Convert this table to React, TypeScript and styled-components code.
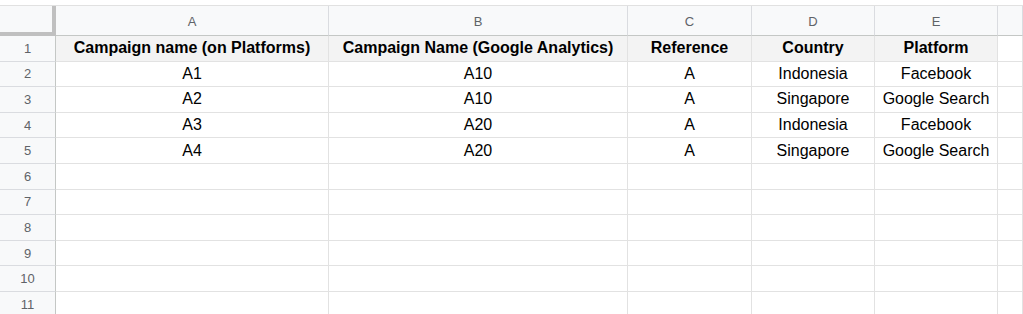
import React from 'react';
import styled, { createGlobalStyle } from 'styled-components';

const GlobalStyle = createGlobalStyle`
  html, body {
    margin: 0;
    padding: 0;
    background: #ffffff;
  }
  body {
    font-family: "Liberation Sans", Arial, sans-serif;
    overflow: hidden;
  }
`;

const Page = styled.div`
  padding-top: 5px;
  width: 1023px;
  height: 314px;
  box-sizing: border-box;
  overflow: hidden;
`;

const Grid = styled.div`
  display: grid;
  grid-template-columns: 56px 273px 299px 124px 123px 123px 1fr;
  grid-template-rows: 30px repeat(11, 25.6px);
  border-top: 1px solid #e1e1e1;
`;

const Corner = styled.div`
  background: #f8f9fa;
  border-right: 4px solid #c0c0c0;
  border-bottom: 4px solid #c0c0c0;
  box-sizing: border-box;
`;

const ColHead = styled.div`
  background: #f8f9fa;
  border-right: 1px solid #dadce0;
  border-bottom: 1px solid #c4c7c5;
  box-sizing: border-box;
  display: flex;
  align-items: center;
  justify-content: center;
  font-size: 13px;
  color: #5f6368;
  padding-top: 1px;
`;

const RowHead = styled.div`
  background: #f8f9fa;
  border-right: 1px solid #c4c7c5;
  border-bottom: 1px solid #dadce0;
  box-sizing: border-box;
  display: flex;
  align-items: center;
  justify-content: center;
  font-size: 13px;
  color: #5f6368;
`;

const Cell = styled.div<{ $head?: boolean }>`
  background: ${({ $head }) => ($head ? '#f3f3f3' : '#ffffff')};
  border-right: 1px solid #e2e2e2;
  border-bottom: 1px solid #e2e2e2;
  box-sizing: border-box;
  display: flex;
  align-items: center;
  justify-content: center;
  font-size: 16px;
  font-weight: ${({ $head }) => ($head ? 700 : 400)};
  color: #000000;
  white-space: nowrap;
  overflow: hidden;
`;

const letters = ['A', 'B', 'C', 'D', 'E', ''];

const rows: string[][] = [
  ['Campaign name (on Platforms)', 'Campaign Name (Google Analytics)', 'Reference', 'Country', 'Platform'],
  ['A1', 'A10', 'A', 'Indonesia', 'Facebook'],
  ['A2', 'A10', 'A', 'Singapore', 'Google Search'],
  ['A3', 'A20', 'A', 'Indonesia', 'Facebook'],
  ['A4', 'A20', 'A', 'Singapore', 'Google Search'],
  ['', '', '', '', ''],
  ['', '', '', '', ''],
  ['', '', '', '', ''],
  ['', '', '', '', ''],
  ['', '', '', '', ''],
  ['', '', '', '', ''],
];

export default function App() {
  return (
    <>
      <GlobalStyle />
      <Page>
        <Grid>
          <Corner />
          {letters.map((l, i) => (
            <ColHead key={i}>{l}</ColHead>
          ))}
          {rows.map((r, ri) => (
            <React.Fragment key={ri}>
              <RowHead>{ri + 1}</RowHead>
              {r.map((c, ci) => (
                <Cell key={ci} $head={ri === 0}>
                  {c}
                </Cell>
              ))}
              <Cell />
            </React.Fragment>
          ))}
        </Grid>
      </Page>
    </>
  );
}
